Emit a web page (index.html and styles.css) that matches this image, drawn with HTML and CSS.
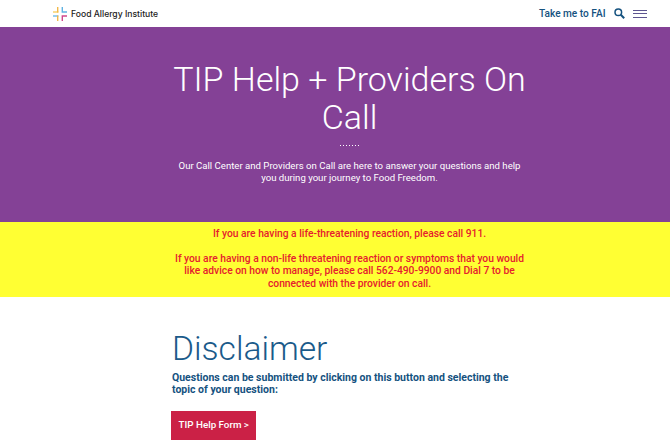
FILE: index.html
```html
<!DOCTYPE html>
<html lang="en">
<head>
<meta charset="utf-8">
<title>TIP Help + Providers On Call</title>
<link rel="stylesheet" href="styles.css">
</head>
<body>
<header class="topbar">
  <a class="brand" href="#">
    <svg class="brand-mark" width="14" height="14" viewBox="0 0 14 14" fill="none" stroke-width="1.4">
      <path d="M0 5H5.4" stroke="#f7cf62"/>
      <path d="M4.7 5.6V0" stroke="#f2b84a"/>
      <path d="M9.3 0V5H14" stroke="#5fb2e2"/>
      <path d="M0 9H5.4" stroke="#6dbbe6"/>
      <path d="M4.7 8.4V14" stroke="#f2b84a"/>
      <path d="M9.3 14V9H14" stroke="#d0488c"/>
    </svg>
    <span class="brand-name">Food Allergy Institute</span>
  </a>
  <nav class="topnav">
    <a class="fai-link" href="#">Take me to FAI</a>
    <svg class="search" width="11" height="11" viewBox="0 0 11 11" fill="none" stroke="#15527f">
      <circle cx="4.3" cy="4.3" r="3.3" stroke-width="1.5"/>
      <path d="M6.8 6.8L10.2 10.2" stroke-width="2"/>
    </svg>
    <span class="burger"><i></i><i></i><i></i></span>
  </nav>
</header>
<section class="hero">
  <div class="column">
    <h1>TIP Help + Providers On Call</h1>
    <div class="dots"></div>
    <p>Our Call Center and Providers on Call are here to answer your questions and help you during your journey to Food Freedom.</p>
  </div>
</section>
<section class="alert">
  <div class="column">
    <p>If you are having a life-threatening reaction, please call 911.</p>
    <p>If you are having a non-life threatening reaction or symptoms that you would like advice on how to manage, please call 562-490-9900 and Dial 7 to be connected with the provider on call.</p>
  </div>
</section>
<main class="content">
  <h2>Disclaimer</h2>
  <p class="lead">Questions can be submitted by clicking on this button and selecting the topic of your question:</p>
  <a class="btn" href="#">TIP Help Form &gt;</a>
</main>
</body>
</html>
```
FILE: styles.css
```css
* { box-sizing: border-box; }
html, body { margin: 0; padding: 0; }
body { font-family: "Roboto", "Liberation Sans", sans-serif; background: #fff; overflow: hidden; height: 447px; }
a { text-decoration: none; color: inherit; }
.topbar { height: 27px; display: flex; align-items: center; justify-content: space-between; padding: 0 23px 0 53px; background: #fff; }
.brand { display: flex; align-items: center; gap: 4px; }
.brand-mark { display: block; }
.brand-name { font-family: "Inter", sans-serif; font-size: 8.6px; font-weight: 500; color: #222; }
.topnav { display: flex; align-items: center; }
.fai-link { font-size: 10.1px; font-weight: 500; color: #15527f; margin-right: 8.5px; }
.search { display: block; margin-right: 8px; }
.burger { display: flex; flex-direction: column; gap: 2.5px; width: 14px; }
.burger i { display: block; height: 1px; background: #5d5590; }
.column { width: 355px; margin-left: 172px; }
.hero { height: 195px; background: #844196; color: #fff; text-align: center; padding-top: 33px; }
.hero h1 { margin: 0; font-size: 34px; line-height: 38px; font-weight: 300; }
.dots { width: 20px; height: 1px; margin: 9px auto 0; background: repeating-linear-gradient(90deg, #fff 0 1px, transparent 1px 3px); }
.hero p { margin: 14px 0 0; font-size: 9.6px; line-height: 12.3px; font-weight: 400; }
.alert { height: 75px; background: #ffff33; color: #e5202e; text-align: center; padding-top: 6px; font-size: 10.28px; line-height: 12.4px; font-weight: 500; }
.alert p { margin: 0 0 12.4px; }
.content { padding: 33px 0 0 172px; width: 510px; }
.content h2 { margin: 0; font-size: 33.6px; line-height: 38px; font-weight: 300; color: #1a5a8a; }
.lead { margin: 4px 0 0; font-size: 10.5px; line-height: 12.4px; font-weight: 700; color: #15527f; width: 345px; }
.btn { display: inline-block; margin: 14px 0 0 -1px; height: 29px; line-height: 28px; padding: 0 7.5px; background: #cb2146; color: #fff; font-size: 9.8px; font-weight: 500; }
```
